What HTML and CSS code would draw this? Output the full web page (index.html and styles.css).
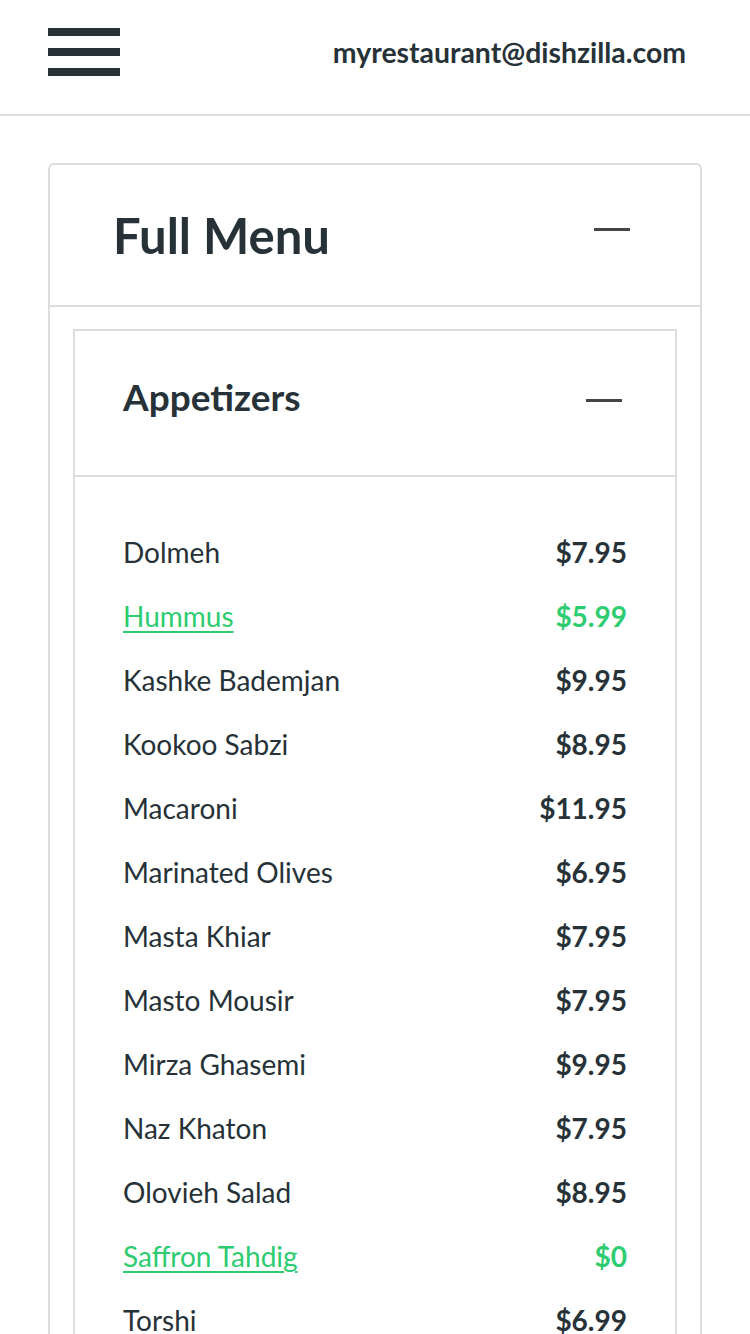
FILE: index.html
```html
<!DOCTYPE html>
<html>
<head>
<meta charset="utf-8">
<link rel="stylesheet" href="styles.css">
</head>
<body>
<header class="topbar">
  <div class="burger"><span></span><span></span><span></span></div>
  <div class="email">myrestaurant@dishzilla.com</div>
</header>
<main class="content">
  <section class="card">
    <div class="card-head">
      <h1 class="card-title">Full Menu</h1>
      <span class="minus minus-lg"></span>
    </div>
    <div class="card-body">
      <section class="cat">
        <div class="cat-head">
          <h2 class="cat-title">Appetizers</h2>
          <span class="minus minus-sm"></span>
        </div>
        <ul class="items">
          <li class="item"><span class="name">Dolmeh</span><span class="price">$7.95</span></li>
          <li class="item active"><a class="name" href="#">Hummus</a><span class="price">$5.99</span></li>
          <li class="item"><span class="name">Kashke Bademjan</span><span class="price">$9.95</span></li>
          <li class="item"><span class="name">Kookoo Sabzi</span><span class="price">$8.95</span></li>
          <li class="item"><span class="name">Macaroni</span><span class="price">$11.95</span></li>
          <li class="item"><span class="name">Marinated Olives</span><span class="price">$6.95</span></li>
          <li class="item"><span class="name">Masta Khiar</span><span class="price">$7.95</span></li>
          <li class="item"><span class="name">Masto Mousir</span><span class="price">$7.95</span></li>
          <li class="item"><span class="name">Mirza Ghasemi</span><span class="price">$9.95</span></li>
          <li class="item"><span class="name">Naz Khaton</span><span class="price">$7.95</span></li>
          <li class="item"><span class="name">Olovieh Salad</span><span class="price">$8.95</span></li>
          <li class="item active"><a class="name" href="#">Saffron Tahdig</a><span class="price">$0</span></li>
          <li class="item"><span class="name">Torshi</span><span class="price">$6.99</span></li>
        </ul>
      </section>
    </div>
  </section>
</main>
</body>
</html>
```
FILE: styles.css
```css
* { box-sizing: border-box; }
html, body { margin: 0; padding: 0; background: #fff; }
body {
  font-family: Lato, "Open Sans", sans-serif;
  color: #263238;
}
.topbar {
  height: 116px;
  border-bottom: 2px solid #dddddd;
  display: flex;
  align-items: flex-start;
  justify-content: space-between;
  padding: 28px 64px 0 48px;
}
.burger {
  width: 72px;
  display: flex;
  flex-direction: column;
  gap: 12px;
}
.burger span {
  display: block;
  height: 8px;
  background: #263238;
}
.email {
  font-size: 28.4px;
  font-weight: 700;
  line-height: 48px;
}
.content {
  padding: 47px 48px 0 48px;
}
.card {
  border: 2px solid #dddddd;
  border-bottom: none;
  border-radius: 6px 6px 0 0;
}
.card-head {
  height: 142px;
  border-bottom: 2px solid #dddddd;
  display: flex;
  align-items: center;
  justify-content: space-between;
  padding: 0 70px 0 63px;
}
.card-title {
  margin: 0;
  font-size: 49px;
  font-weight: 700;
  line-height: 1;
}
.minus {
  display: block;
  height: 3px;
  background: #444;
}
.minus-lg { width: 36px; margin-top: -12px; }
.minus-sm { width: 36px; margin-top: -6px; }
.card-body {
  padding: 22px 23px 0 23px;
}
.cat {
  border: 2px solid #dddddd;
  border-bottom: none;
}
.cat-head {
  height: 146px;
  border-bottom: 2px solid #dddddd;
  display: flex;
  align-items: center;
  justify-content: space-between;
  padding: 0 53px 0 48px;
}
.cat-title {
  margin: 0 0 14px 0;
  font-size: 37px;
  font-weight: 700;
  line-height: 1;
}
.items {
  list-style: none;
  margin: 0;
  padding: 43px 48px 0 48px;
}
.item {
  height: 64px;
  display: flex;
  align-items: center;
  justify-content: space-between;
  font-size: 28px;
}
.name { font-weight: 400; color: #263238; }
.price { font-weight: 700; }
.item.active .name,
.item.active .price { color: #2ecc71; }
.item.active .name { text-decoration: underline; text-underline-offset: 4px; text-decoration-thickness: 2px; }
```
